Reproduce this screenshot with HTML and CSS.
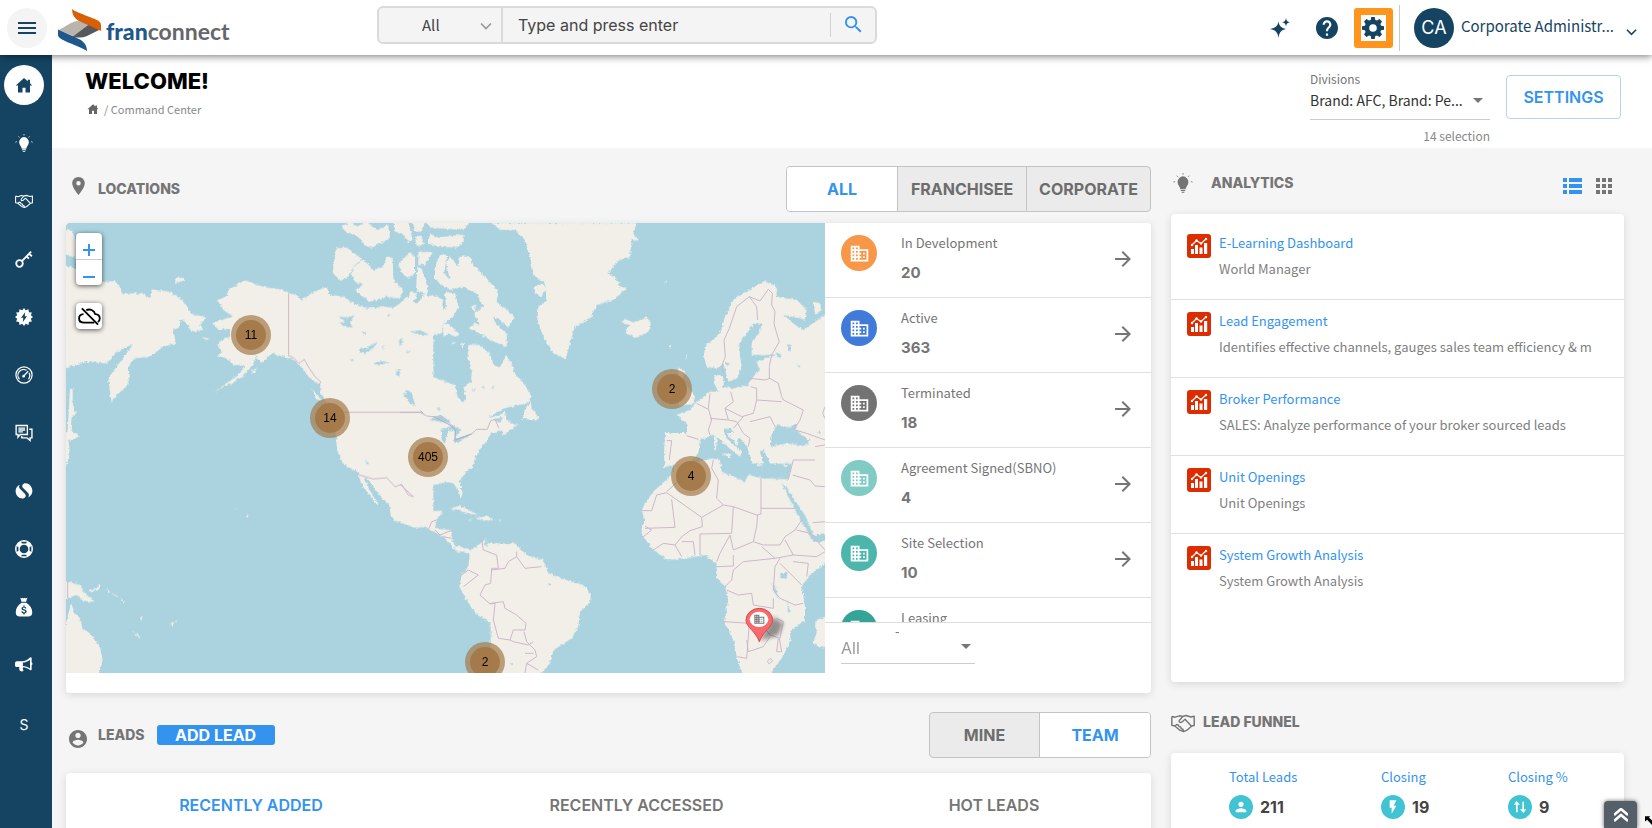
FILE: index.html
```html
<!DOCTYPE html>
<html lang="en">
<head>
<meta charset="utf-8">
<title>Command Center</title>
<link rel="stylesheet" href="styles.css">
</head>
<body>
<svg class="defs" aria-hidden="true">
  <symbol id="i-home" viewBox="0 0 24 24"><path d="M12 2.500 1 12.500h3V22h6v-6.500h4V22h6v-9.500h3l-3-2.800V5h-3v2z"/></symbol>
  <symbol id="i-bulb" viewBox="0 0 24 24"><path d="M12 4a7 7 0 0 0-6.500 7c0 3.500 3 5 3.500 8.500h6c.500-3.500 3.500-5 3.500-8.500A7 7 0 0 0 12 4zM9.300 20.300h5.400v1.200H9.300zM10.300 22.500h3.400v1.200h-3.400z"/><path d="M12 0v2M4.500 3.200l1.400 1.500M19.500 3.200l-1.400 1.500M.5 11l2-.8M23.500 11l-2-.8" stroke="currentColor" stroke-width="1" fill="none"/></symbol>
  <symbol id="i-shake" viewBox="0 0 24 24"><g fill="none" stroke="currentColor" stroke-width="1.400" stroke-linejoin="round"><path d="M.8 5.500 4 6.200l4.500-1.400 3 .7 3.500-1 5 1.500 3.200-.7v9.200l-2.700.5"/><path d="M.8 5.500v8.800l3 .7 5 4.200 3.700 1.400 3.500-1.400 4.500-4-6.500-6.900-3.200 2.900c-2 1-3.400-.7-2.200-2.200L11.500 6M3.800 15l2-1.500 1.500.4.700 1.700 1.700.4.600 1.700 1.600.4.600 2M20.500 15.200l-6-6.500"/></g></symbol>
  <symbol id="i-key" viewBox="0 0 24 24"><g fill="none" stroke="currentColor" stroke-width="2.400"><circle cx="6" cy="18" r="4.400"/><path d="M9.200 14.800 21.500 2.300M15.500 8.600l3 3M19 5l3.500 3.500"/></g></symbol>
  <symbol id="i-bolt-gear" viewBox="0 0 24 24"><path fill-rule="evenodd" d="m12 0 2.300 3.100 3.600-1.500.7 3.900 3.900.5-1.400 3.600L24 12l-2.900 2.300 1.400 3.600-3.900.7-.6 3.900-3.700-1.400L12 24l-2.300-2.900L6 22.500l-.6-3.900-3.900-.7 1.400-3.600L0 12l2.900-2.400L1.500 6l3.900-.5.6-3.900 3.700 1.500zM13.500 5.500 8 13h3l-.5 5.500L16 11h-3z"/></symbol>
  <symbol id="i-gauge" viewBox="0 0 24 24"><g fill="none" stroke="currentColor" stroke-width="1.600"><circle cx="12" cy="12" r="10.800"/><path d="M6 17.500a7.600 7.600 0 0 1 9.500-11.700M18.600 9a7.500 7.500 0 0 1-.6 8.500M11.500 13.500l6-6.500"/></g><circle cx="11.500" cy="13.500" r="1.800"/></symbol>
  <symbol id="i-chat" viewBox="0 0 24 24"><g fill="none" stroke="currentColor" stroke-width="1.800"><path d="M1.500 2h15v12H7l-3 3.500V14H1.500z"/><path d="M4.500 5.500h9M4.500 8h9M4.500 10.500h6M19 7h3.600v11.500h-2.500V22l-4-3.500H9V16"/></g></symbol>
  <symbol id="i-halves" viewBox="0 0 24 24"><path d="M6.500 3.500C3 5 .8 8.200.8 12c0 6 4.500 10 9 10 4 0 5.700-3.500 3.700-6L6.200 8.500c-1.200-1.600-.9-3.500.3-5zM17.500 20.500c3.500-1.500 5.700-4.700 5.700-8.500 0-6-4.500-10.500-9-10.500-4 0-5.700 3.500-3.700 6l7.300 7.500c1.200 1.600.9 4-.3 5.500z"/></symbol>
  <symbol id="i-ring" viewBox="0 0 24 24"><path fill-rule="evenodd" d="M12 0a12 12 0 1 0 0 24 12 12 0 0 0 0-24zm0 6.200a5.800 5.800 0 1 1 0 11.600 5.800 5.800 0 0 1 0-11.600z"/><path class="ring-cut" d="M8.200 2.200h7.600l-1 2.300H9.200zM8.200 21.800h7.600l-1-2.300H9.200zM2.200 8.200v7.600l2.300-1V9.200zM21.800 8.200v7.600l-2.300-1V9.200z"/></symbol>
  <symbol id="i-money" viewBox="0 0 24 26"><path d="M7 .8c1.300 1 2.300.6 3-.3.700 1 1.800 1 2.500 0 .7.900 2.300 1.300 4 .3L14.800 6H8.700zM8.500 7.300h6.500C20 10.500 23 15 23 20c0 4-2 5.500-5.500 5.500h-11C3 25.500 1 24 1 20c0-5 2.800-9.500 7.500-12.700z"/><path class="ring-cut" d="M11.200 11h1.600v1.500c1.500.2 2.300 1.100 2.400 2.400h-1.700c-.3-1.600-3-1.300-2.900 0 .1 1.500 5 .7 5 4 0 1.500-1.200 2.400-2.800 2.600V23h-1.600v-1.500c-1.700-.2-2.700-1.200-2.800-2.800h1.700c.2 1.900 3.600 1.700 3.500.2-.1-1.700-4.900-.7-4.900-3.900 0-1.400 1-2.300 2.500-2.500z"/></symbol>
  <symbol id="i-horn" viewBox="0 0 24 24"><path fill-rule="evenodd" d="M21 1.500c.8 0 1.200.4 1.200 1.200v6c1.500.4 1.500 3.200 0 3.600V18c0 1-1 1.400-1.800.9-3-2-6-3.500-9.500-3.900-1 1.500-.3 3 .5 4.500-1.500 1.500-4.400 1.300-5.200-.2-.7-1.600-.8-3-.4-4.500H2.500C.5 14.800 0 13.500 0 11s.5-4 2.500-4H9c4.500 0 8-2 11-5zM20 5.200c-3 2-6.500 3.400-9.500 3.600v4.400c3.400.3 6.700 1.500 9.500 3.300z"/></symbol>
  <symbol id="i-building" viewBox="0 0 24 24"><path d="M12 7V3H2v18h20V7H12zM6 19H4v-2h2v2zm0-4H4v-2h2v2zm0-4H4V9h2v2zm0-4H4V5h2v2zm4 12H8v-2h2v2zm0-4H8v-2h2v2zm0-4H8V9h2v2zm0-4H8V5h2v2zm10 12h-8v-2h2v-2h-2v-2h2v-2h-2V9h8v10zm-2-8h-2v2h2v-2zm0 4h-2v2h2v-2z"/></symbol>
  <symbol id="i-arrow" viewBox="0 0 24 24"><path d="m12 4-1.410 1.410L16.170 11H4v2h12.170l-5.580 5.590L12 20l8-8z"/></symbol>
  <symbol id="i-chart" viewBox="0 0 24 24"><rect width="24" height="24" rx="3" fill="#dd2c00"/><path fill="#fff" d="M4 15h3v5H4zM8 11h3v9H8zM12.500 13.500h3V20h-3zM17 9h3.200v11H17z"/><path d="m5 11 4.500-4.500 4.500 3L19 5" fill="none" stroke="#fff" stroke-width="1.200"/><g fill="#fff"><circle cx="5" cy="11" r="1.200"/><circle cx="9.500" cy="6.500" r="1.200"/><circle cx="14" cy="9.500" r="1.200"/><circle cx="19" cy="5" r="1.200"/></g></symbol>
  <symbol id="i-chevron" viewBox="0 0 12 8"><path d="m1 1.500 5 5 5-5" fill="none" stroke="currentColor" stroke-width="1.700"/></symbol>
</svg>

<header class="topbar">
  <button class="burger" aria-label="Menu"><svg viewBox="0 0 18 12"><path d="M0 0h18v2H0zM0 5h18v2H0zM0 10h18v2H0z"/></svg></button>
  <a class="logo" href="#">
    <svg viewBox="0 0 43 42" aria-hidden="true">
      <path fill="#b9b5ab" d="M1 21 12 14.500c5-3 9-3 13-2l7 3L15 27z"/>
      <path fill="#57585c" d="m14 28 17-12.500L43 20 30 26.500c-5 2.500-11 2.500-16 1.500z"/>
      <path fill="#d85f05" d="M14 0c4 3.500 22 9 26 11.500 2.500 1.500 3 3 3 5V22L20 11.500C16 9 14 5 14 0z"/>
      <path fill="#1d578c" d="M0 20.500 22 30.500c4.500 2.500 7 6.500 7 11.500-6-4-19-8-25-11.500-3-1.700-4-3-4-5z"/>
    </svg>
    <span class="logo-text"><b>fran</b>connect</span>
  </a>
  <form class="search">
    <div class="search-scope">
      <select aria-label="Search scope"><option>All</option></select>
      <svg viewBox="0 0 12 8"><use href="#i-chevron"/></svg>
    </div>
    <input type="text" aria-label="Search" placeholder="Type and press enter">
    <button type="button" class="search-go" aria-label="Search"><svg viewBox="3 3 18 18"><path d="M15.500 14h-.79l-.28-.27A6.471 6.471 0 0 0 16 9.500 6.500 6.500 0 1 0 9.500 16c1.610 0 3.090-.59 4.230-1.570l.27.28v.79l5 4.990L20.490 19l-4.990-5zm-6 0C7.010 14 5 11.990 5 9.500S7.010 5 9.500 5 14 7.010 14 9.500 11.990 14 9.500 14z"/></svg></button>
  </form>
  <div class="tools">
    <button aria-label="Assistant"><svg class="spark" viewBox="0 0 20 20"><path d="M8.500 3.500c.8 4.600 2.600 6.300 7.500 7.500-4.900 1.200-6.700 3.300-7.500 9-.8-5.700-2.800-7.800-8.500-9 5.700-1.200 7.700-2.900 8.500-7.500zM16 0c.4 2.700 1.300 3.600 4 4.200-2.700.6-3.600 1.500-4 4.200-.4-2.700-1.300-3.600-4-4.200 2.700-.6 3.600-1.500 4-4.200z"/></svg></button>
    <button aria-label="Help"><svg class="tool-icon" viewBox="2 2 20 20"><path d="M12 2C6.480 2 2 6.480 2 12s4.480 10 10 10 10-4.480 10-10S17.520 2 12 2zm1 17h-2v-2h2v2zm2.070-7.750-.9.920C13.450 12.900 13 13.500 13 15h-2v-.5c0-1.100.45-2.100 1.170-2.830l1.240-1.260c.37-.36.590-.86.590-1.410 0-1.100-.9-2-2-2s-2 .9-2 2H8c0-2.210 1.790-4 4-4s4 1.790 4 4c0 .88-.36 1.680-.93 2.250z"/></svg></button>
    <button class="gear" aria-label="Settings"><svg class="tool-icon" viewBox="0 0 22 22"><path fill-rule="evenodd" d="M9.300 0h3.400l.6 2.900 1.700.7L17.500 2 20 4.500 18.400 7l.7 1.700 2.900.6v3.400l-2.900.6-.7 1.700 1.600 2.500-2.500 2.500-2.500-1.600-1.700.7-.6 2.900H9.300l-.6-2.900-1.700-.7L4.500 20 2 17.500 3.600 15l-.7-1.700L0 12.700V9.300l2.900-.6L3.600 7 2 4.500 4.500 2 7 3.600l1.700-.7zM11 7.200a3.800 3.800 0 1 0 0 7.600 3.800 3.800 0 0 0 0-7.600z"/></svg></button>
  </div>
  <button class="account">
    <span class="avatar">CA</span>
    <span class="name">Corporate Administr...</span>
    <svg viewBox="0 0 12 8"><use href="#i-chevron"/></svg>
  </button>
</header>

<div class="shell">
  <nav class="side" aria-label="Main">
    <a class="on" href="#" aria-label="Home"><svg><use href="#i-home"/></svg></a>
    <a href="#" aria-label="Insights"><svg class="tall"><use href="#i-bulb"/></svg></a>
    <a href="#" aria-label="Sales"><svg><use href="#i-shake"/></svg></a>
    <a href="#" aria-label="Opener"><svg><use href="#i-key"/></svg></a>
    <a href="#" aria-label="Operations"><svg><use href="#i-bolt-gear"/></svg></a>
    <a href="#" aria-label="Performance"><svg><use href="#i-gauge"/></svg></a>
    <a href="#" aria-label="Messages"><svg><use href="#i-chat"/></svg></a>
    <a href="#" aria-label="Pipeline"><svg><use href="#i-halves"/></svg></a>
    <a href="#" aria-label="Support"><svg><use href="#i-ring"/></svg></a>
    <a href="#" aria-label="Finance"><svg class="tall"><use href="#i-money"/></svg></a>
    <a href="#" aria-label="Marketing"><svg><use href="#i-horn"/></svg></a>
    <a class="letter" href="#">S</a>
  </nav>

  <main>
    <section class="pagehead">
      <div class="titles">
        <h1>WELCOME!</h1>
        <p class="crumbs"><svg><use href="#i-home"/></svg><span>/ Command Center</span></p>
      </div>
      <div class="divisions">
        <label for="division">Divisions</label>
        <select id="division"><option>Brand: AFC, Brand: Pe...</option></select>
        <small>14 selection</small>
      </div>
      <button class="settings">SETTINGS</button>
    </section>

    <div class="columns">
      <div class="left">
        <div class="sechead">
          <svg class="pin" viewBox="5 2 14 20"><path d="M12 2C8.130 2 5 5.130 5 9c0 5.250 7 13 7 13s7-7.750 7-13c0-3.870-3.130-7-7-7zm0 9.500a2.500 2.500 0 1 1 0-5 2.500 2.500 0 0 1 0 5z"/></svg>
          <h2>LOCATIONS</h2>
          <div class="seg seg3"><button class="on">ALL</button><button>FRANCHISEE</button><button>CORPORATE</button></div>
        </div>
        <section class="card locations">
          <div class="map">
            <svg class="world" viewBox="198 669 2277 1350" preserveAspectRatio="xMidYMid slice" role="img" aria-label="Map of locations">
              <defs>
                <filter id="coast" x="0" y="0" width="100%" height="100%"><feTurbulence type="fractalNoise" baseFrequency=".11" numOctaves="3" seed="4"/><feDisplacementMap in="SourceGraphic" scale="11" xChannelSelector="R" yChannelSelector="G"/></filter>
                <filter id="soft"><feGaussianBlur stdDeviation="7"/></filter>
              </defs>
              <rect x="150" y="600" width="2400" height="1500" fill="#aad3df"/>
              <g filter="url(#coast)">
                <g class="land">
                  <g transform="translate(0 600)">
                    <path d="M190 195 230 205V125L215 90 190 92V160L230 175V250L345 243 362 265 365 280 430 280 450 295 455 268 510 275 545 300 575 340 620 355 600 372 610 390 575 395 555 365 540 360 540 380 520 390 528 430 490 440 450 470 400 475 385 500 390 530 380 560 350 585 335 608 325 540 335 520 400 432 370 445 345 460 320 490 260 485 198 503 180 510Z"/>
                    <path d="M522 240 540 230 555 240 530 248ZM210 565 218 568 218 610 228 640 215 650 212 690 238 708 215 722 190 715 203 690ZM190 735 205 740 208 765 198 800 185 800ZM604 410 628 416 620 420Z"/>
                    <path d="M652 300 680 290 685 270 735 240 770 255 800 262 850 270 866 280 885 283 905 300 925 285 965 265 980 262 990 285 1030 290 1060 310 1100 325 1150 320 1200 325 1230 350 1260 310 1300 310 1300 790 1028 790 1010 740 1008 690 1000 660 985 610 960 580 962 555 945 545 925 530 905 500 880 480 850 470 815 460 785 490 770 470 750 505 730 525 690 550 640 577 690 543 720 520 735 497 700 495 690 480 665 470 650 470 665 455 652 435 665 420 690 410 690 385 660 390 637 370 660 360 700 350 670 330Z"/>
                    <path d="M935 565 965 600 950 598Z"/>
                    <path d="M750 512 770 505 765 522ZM695 540 740 520 690 556Z"/>
                  </g>
                  <g transform="translate(990 645)">
                    <path d="M35 35 60 20 80 35 110 20 140 45 175 30 180 70 150 85 125 98 105 92 95 75 75 60 50 55ZM190 20 235 20 248 75 235 82 220 60 195 50ZM255 65 275 62 282 90 260 92ZM245 20 285 20 275 50 255 50ZM300 55 325 68 400 58 402 75 385 97 320 95 295 85ZM290 20 420 20 400 45 300 38Z"/>
                    <path d="M18 100 50 97 95 132 70 155 55 185 30 197 8 172ZM72 155 100 133 130 165 160 155 170 122 188 130 190 190 218 225 210 250 170 245 120 260 75 228 100 210 75 200 65 180ZM205 145 240 112 255 125 255 175 235 190 215 175ZM265 110 308 112 285 150 265 150ZM262 155 275 160 295 225 290 240 258 225ZM240 230 262 235 250 262 235 255Z"/>
                  </g>
                  <g transform="translate(1200 600)">
                    <path d="M-30 330 0 310 20 290 50 310 75 280 95 300 125 300 130 330 150 320 145 280 165 290 175 320 160 350 130 370 125 400 95 405 65 450 62 490 80 520 120 540 165 555 172 590 190 607 198 590 190 560 213 545 215 515 203 465 205 435 240 435 272 465 280 495 300 502 318 465 335 490 345 520 385 570 395 590 380 610 310 625 285 640 262 655 300 645 315 635 320 660 345 675 357 672 310 706 305 690 270 702 262 725 235 740 218 800-30 800Z"/>
                    <path d="M365 655 380 620 392 600 395 625 418 655 400 660ZM105 200 120 165 142 165 132 220 150 240 138 190 150 170 175 200 180 168 212 172 220 195 260 235 295 275 290 305 345 350 325 383 300 360 280 350 285 370 320 400 320 440 280 425 230 395 205 385 225 370 240 375 220 340 250 320 230 280 190 260 150 270 105 240ZM130 370 150 375 180 405 165 410 145 400 130 410ZM210 320 228 315 225 335ZM35 285 50 280 45 300ZM75 290 100 285 130 300 120 340 85 330ZM135 275 165 280 175 320 155 350 138 330ZM405 260 430 250 438 270 420 290 403 275ZM155 425 168 428 158 434ZM182 428 192 432 188 443Z"/>
                    <path d="M275 69 300 90 345 90 375 120 395 190 400 225 435 250 440 300 415 320 412 360 430 410 460 460 497 477 510 430 525 380 570 355 590 315 640 300 680 265 650 255 630 265 660 250 640 230 625 220 650 185 690 170 695 120 718 122 700 100 710 69Z"/>
                    <path d="M665 370 690 375 680 385 678 402 710 413 735 402 750 390 752 370 740 352 715 362 700 367 672 355ZM830 500 855 512 850 540 870 570 885 590 880 612 835 618 845 560ZM795 570 825 560 825 590 795 600ZM808 435 814 436 811 450ZM855 470 862 462 858 478ZM792 245 802 242 798 249Z"/>
                    <path d="M1300 330 1275 345 1245 365 1210 390 1180 370 1150 345 1215 358 1220 330 1190 300 1130 290 1130 260 1095 243 1060 262 1030 280 1000 300 975 350 960 400 915 440 912 470 920 500 950 505 970 490 985 545 1010 535 1025 500 1020 470 1018 430 1040 400 1060 370 1085 370 1080 395 1055 430 1055 465 1110 465 1140 460 1070 485 1080 510 1060 530 1045 555 1000 565 965 560 975 545 960 525 945 525 940 545 955 575 930 575 885 610 870 630 830 645 860 670 862 707 800 707 795 725 792 800 865 790 895 760 900 720 940 705 960 720 1000 755 1020 770 1026 755 980 715 970 690 990 685 1040 735 1055 790 1090 790 1080 755 1110 735 1100 760 1110 790 1300 790ZM942 710 950 712 948 755 942 750ZM1240 305 1262 310 1262 335 1245 340Z"/>
                  </g>
                  <g transform="translate(0 1320)">
                    <path d="M1010-20 1012 30 1040 80 1072 95 1080 120 1095 150 1112 170 1133 197 1135 190 1112 155 1092 118 1098 112 1108 120 1125 150 1168 195 1172 225 1200 240 1245 263 1300 262V-20Z"/>
                    <path d="M190 422 240 435 255 460 285 488 250 482 230 465 190 478ZM213 490 225 520 240 535 248 565 270 580 300 620 308 660 300 690 290 710 180 710 198 550ZM265 450 290 445 297 432 303 437 295 450 275 455ZM397 572 425 595 415 593ZM510 552 522 547 520 557ZM522 545 533 540 530 546ZM318 445 330 455 325 460ZM335 458 355 468 350 470ZM360 470 375 490 370 490ZM420 528 426 530 424 545ZM738 224 748 228 742 235ZM704 204 711 206 708 208ZM180-20 205 0 209 30 198 65 180 65Z"/>
                  </g>
                  <g transform="translate(1200 1320)">
                    <path d="M-20 240 40 262 75 262 100 275 130 290 150 310 170 335 195 335 210 345 212 330 190 322 165 318 152 290 158 270 125 268 105 262 112 235 128 212 100 213 80 238 45 235 36 200 40 165 50 145 80 135 115 133 135 125 160 130 175 150 182 175 188 160 178 125 195 100 220 75 225 50 240 30 262-20-20-20Z"/>
                    <path d="M210 335 260 295 265 310 290 310 345 310 380 345 430 360 445 400 500 420 550 435 573 460 570 490 540 515 535 560 515 595 460 630 450 670 415 710 272 710 272 550 225 520 200 480 178 440 185 405 205 380ZM150 205 180 197 235 225 205 220ZM225 235 260 228 285 240 250 242ZM203 240 218 240 210 243ZM296 239 308 241 298 243Z"/>
                    <path d="M795-20 792 50 812 75 830 68 865 55 880 25 895 0 895-20ZM1085-20 1080 10 1060 40 1045 20 1040-20ZM1020-20 1012 20 1000 0 980-20ZM965 40 995 42 990 55ZM945 0 950 0 948 15 942 10ZM1068 70 1090 75 1072 78Z"/>
                    <path d="M1090 30 1090-20 1300-20 1300 340 1275 370 1225 410 1205 440 1215 500 1215 540 1170 575 1172 600 1145 655 1105 710 1030 710 1010 650 1000 600 972 545 985 480 975 440 948 410 950 370 915 345 855 355 805 360 760 330 730 290 723 275 733 240 725 212 735 190 760 155 810 110 825 78 870 70 935 55 960 60 965 95 1000 110 1035 125 1045 105 1090 115 1165 118 1178 60 1150 70 1110 65ZM1275 530 1245 545 1250 580 1240 605 1255 622 1290 620V530ZM1148 75 1162 76 1155 82Z"/>
                  </g>
                </g>
                <g class="water">
                  <g transform="translate(990 645)"><path d="M25 305 55 308 72 300 60 325 68 338 45 335 28 325 45 318ZM88 400 108 400 145 378 130 398 105 415 88 412ZM132 445 155 438 180 443 140 452ZM200 465 212 460 208 485 198 480ZM220 540 235 530 258 572 240 565 238 550 225 548ZM208 375 218 368 216 392 208 390ZM240 350 270 345 300 360 262 358ZM228 410 240 405 235 415ZM170 300 180 298 176 306ZM95 350 108 348 102 358ZM155 395 165 390 160 402ZM320 580 330 576 328 586ZM455 518 465 510 460 524ZM425 525 435 520 430 530ZM485 512 493 515 488 522ZM105 735 118 745 110 748ZM60 435 72 430 68 440Z"/></g>
                  <g transform="translate(0 600)"><path d="M445 275 440 295 435 280Z"/></g>
                  <g transform="translate(1200 600)"><path d="M1110 715 1130 672 1165 682 1195 670 1185 690 1230 722 1215 738 1160 730 1115 740ZM85 660 120 645 150 660 145 668ZM122 690 160 675 185 690 170 705 160 690 145 690 135 730 125 720ZM160 720 215 700 200 712 165 728ZM15 570 35 575 45 620 25 600ZM1125 455 1145 465 1140 475ZM1160 430 1175 435 1170 460ZM1190 495 1202 498 1198 505ZM975 485 990 490 980 500ZM1255 700 1258 690 1262 700ZM280 660 310 650 300 668Z"/></g>
                  <g transform="translate(1200 1320)"><path d="M1145 130 1162 145 1180 175 1215 225 1240 285 1285 283V305L1240 305 1215 265 1190 220 1160 160ZM1140 400 1162 398 1160 415 1142 415ZM1120 425 1124 440 1138 470 1132 473 1118 445ZM1162 480 1170 515 1164 518ZM255 300 265 298 262 322 255 315ZM330 670 340 670 338 676ZM445 430 455 430 448 438ZM158 0 190 0 165 10Z"/></g>
                </g>
              </g>
              <g class="borders">
                <g transform="translate(0 600)"><path d="M866 280V468L880 472 897 490 913 478 925 500 945 530 962 545 957 556M1030 637H1265"/></g>
                <g transform="translate(1200 600)"><path d="M0 637H60L80 648 120 652 150 670 167 690 165 722 215 702 230 688 262 688 272 662 285 658 297 685M970 520 968 490 976 470 972 420 988 385 1010 320 1048 290 1070 320 1073 360M1048 290 1080 303 1105 268 1117 280 1115 315 1125 335 1122 370 1130 400 1138 425 1115 465 1108 500 1108 535M1050 535 1095 540 1110 535 1135 550 1145 590 1150 600 1210 630 1200 660 1180 690M1070 600 1145 605M1070 600 1070 565 1052 560M1070 600 1060 640 1025 650 975 625 1000 605 992 575M930 580 925 625 935 660 925 690 930 705M890 610 925 628M975 625 985 660 930 655M985 660 1010 665 1030 700 1050 715 1045 740M1030 650 1000 685M1050 665 1110 650 1125 680M860 707 895 718M800 722 815 722 808 780M1185 690 1220 700 1275 720M1245 740 1275 735M1275 620 1268 640 1275 655"/></g>
                <g transform="translate(0 1320)"><path d="M1072 103 1120 117 1160 113 1185 140 1205 133 1225 165 1240 170M203 422V476"/></g>
                <g transform="translate(1200 1320)"><path d="M0 133 40 170M85 270 95 245 110 240M105 270 120 285 158 270M130 290 155 295M245 300 250 330 290 345 295 385 275 385 272 430 255 435 240 465 270 492 285 490 280 540 295 595 330 600 340 570 375 570 378 550 350 525 315 505 310 485 272 490M275 390 315 385 325 365 350 350 350 335M350 350 375 385 425 380M185 405 205 390 235 405 190 440M330 600 340 605 385 615 400 605M372 575 380 605 405 630 410 650 380 670 415 690M400 640 375 640M380 670 375 699M725 212 755 212 770 165 800 158 905 232 907 260 870 272 845 290 825 315M815 178 825 262 735 265M800 155 850 110M905 232 970 195 950 175 955 120 935 85 940 60M970 195 1000 200 1070 225 1083 222 1083 115M1083 205H1185M1000 200 995 280 900 282 900 345M1073 225 1070 260 1060 305 1000 330 990 285 960 340 950 365M1060 305 1090 315 1140 315 1155 290 1185 270 1205 240M1085 320 1125 355 1180 345 1155 300M1180 345 1250 350 1275 335M1190 270 1230 280 1275 330M1140 355 1125 380 1120 450 1140 475 1185 495 1210 490M1140 370 1205 435M1180 365 1225 370 1220 410M1125 355 1030 365 1000 390 995 420 975 440M950 380 1000 378 1000 345M980 450 1015 465 1055 460 1060 495 1120 505M972 545 1048 550 1045 590 1040 655 1012 650M1048 550 1080 545 1110 585 1140 595 1150 545 1130 535M1120 505 1120 475M1040 600 1045 635 1090 620 1110 590M1135 595 1130 635 1145 635 1138 595M1110 655 1118 662 1108 672 1102 665ZM1165 118 1180 60 1245 60M1178 105 1230 120 1245 138 1275 140M1238 248 1275 245M760 330 790 310 825 315 845 350M845 305 880 305 885 345M730 290 755 270 735 258"/></g>
              </g>
              <path d="M1261 1232 1270 1240M1300 1250 1350 1275 1366 1290 1365 1320 1415 1302" fill="none" stroke="#9db4d3" stroke-width="3"/>
              <g class="cluster">
                <g transform="translate(753 1005)"><circle r="60"/><circle r="45"/><text y="12">11</text></g>
                <g transform="translate(990 1254)"><circle r="60"/><circle r="45"/><text y="12">14</text></g>
                <g transform="translate(1284 1371)"><circle r="60"/><circle r="45"/><text y="12">405</text></g>
                <g transform="translate(2016 1167)"><circle r="60"/><circle r="45"/><text y="12">2</text></g>
                <g transform="translate(2073 1428)"><circle r="60"/><circle r="45"/><text y="12">4</text></g>
                <g transform="translate(1455 1986)"><circle r="60"/><circle r="45"/><text y="12">2</text></g>
              </g>
              <path d="M2280 1922 2318 1850 2350 1870 2335 1905Z" fill="#000" opacity=".4" filter="url(#soft)"/>
              <path d="M2278 1925c-10-30-40-45-40-64a40 36 0 0 1 80 0c0 19-30 34-40 64z" fill="#f86a6c" stroke="#d8434b" stroke-width="3"/>
              <ellipse cx="2277" cy="1858" rx="28" ry="23" fill="#fff"/>
              <svg x="2259" y="1840" width="38" height="36" fill="#4c4f59"><use href="#i-building"/></svg>
            </svg>
            <div class="zoomer"><button aria-label="Zoom in"><svg viewBox="0 0 12 12"><path d="M0 6h12M6 0v12"/></svg></button><button aria-label="Zoom out"><svg viewBox="0 0 12 12"><path d="M0 6h12"/></svg></button></div>
            <button class="cloud" aria-label="Hide weather"><svg viewBox="0 0 24 20"><path d="M8.500 3.500A6.500 6.500 0 0 1 18 7.500c3 .3 4.800 2 4.800 4.500 0 1.800-.8 3-2 3.800M17 16.500H6.500C3 16.500 1 14.500 1 12c0-2.400 1.900-4.300 4.700-4.500M4 1.500l17 17" fill="none" stroke="#000" stroke-width="1.900"/></svg></button>
          </div>
          <div class="status">
            <ul>
              <li><span class="dot orange"><svg><use href="#i-building"/></svg></span><div><p>In Development</p><strong>20</strong></div><svg class="go"><use href="#i-arrow"/></svg></li>
              <li><span class="dot blue"><svg><use href="#i-building"/></svg></span><div><p>Active</p><strong>363</strong></div><svg class="go"><use href="#i-arrow"/></svg></li>
              <li><span class="dot grey"><svg><use href="#i-building"/></svg></span><div><p>Terminated</p><strong>18</strong></div><svg class="go"><use href="#i-arrow"/></svg></li>
              <li><span class="dot mint"><svg><use href="#i-building"/></svg></span><div><p>Agreement Signed(SBNO)</p><strong>4</strong></div><svg class="go"><use href="#i-arrow"/></svg></li>
              <li><span class="dot teal"><svg><use href="#i-building"/></svg></span><div><p>Site Selection</p><strong>10</strong></div><svg class="go"><use href="#i-arrow"/></svg></li>
              <li><span class="dot deep"><svg><use href="#i-building"/></svg></span><div><p>Leasing</p></div></li>
            </ul>
            <div class="filter"><span class="dash" aria-hidden="true">-</span><select aria-label="Filter by division"><option>All</option></select></div>
          </div>
        </section>

        <div class="sechead leads-head">
          <svg class="user" viewBox="2 2 20 20"><path d="M12 2C6.480 2 2 6.480 2 12s4.480 10 10 10 10-4.480 10-10S17.520 2 12 2zm0 3c1.660 0 3 1.340 3 3s-1.340 3-3 3-3-1.340-3-3 1.340-3 3-3zm0 14.200c-2.500 0-4.710-1.280-6-3.220.03-1.990 4-3.080 6-3.080 1.990 0 5.970 1.090 6 3.080-1.290 1.940-3.500 3.220-6 3.220z"/></svg>
          <h2>LEADS</h2>
          <button class="add">ADD LEAD</button>
          <div class="seg seg2"><button>MINE</button><button class="on">TEAM</button></div>
        </div>
        <section class="card leads">
          <button class="on">RECENTLY ADDED</button><button>RECENTLY ACCESSED</button><button>HOT LEADS</button>
        </section>
      </div>

      <div class="right">
        <div class="sechead analytics-head">
          <svg class="bulb"><use href="#i-bulb"/></svg>
          <h2>ANALYTICS</h2>
          <div class="views">
            <button class="on" aria-label="List view"><svg class="list-icon" viewBox="0 0 19 16"><path d="M0 0h4v4H0zM6 0h13v4H6zM0 6h4v4H0zM6 6h13v4H6zM0 12h4v4H0zM6 12h13v4H6z"/></svg></button>
            <button aria-label="Grid view"><svg class="grid-icon" viewBox="0 0 16 16"><path d="M0 0h4v4H0zM6 0h4v4H6zM12 0h4v4h-4zM0 6h4v4H0zM6 6h4v4H6zM12 6h4v4h-4zM0 12h4v4H0zM6 12h4v4H6zM12 12h4v4h-4z"/></svg></button>
          </div>
        </div>
        <section class="card analytics">
          <article><svg><use href="#i-chart"/></svg><div><a href="#">E-Learning Dashboard</a><p>World Manager</p></div></article>
          <article><svg><use href="#i-chart"/></svg><div><a href="#">Lead Engagement</a><p>Identifies effective channels, gauges sales team efficiency &amp; m</p></div></article>
          <article><svg><use href="#i-chart"/></svg><div><a href="#">Broker Performance</a><p>SALES: Analyze performance of your broker sourced leads</p></div></article>
          <article><svg><use href="#i-chart"/></svg><div><a href="#">Unit Openings</a><p>Unit Openings</p></div></article>
          <article><svg><use href="#i-chart"/></svg><div><a href="#">System Growth Analysis</a><p>System Growth Analysis</p></div></article>
        </section>
        <div class="sechead funnel-head">
          <svg class="shake"><use href="#i-shake"/></svg>
          <h2>LEAD FUNNEL</h2>
        </div>
        <section class="card funnel">
          <div><a href="#">Total Leads</a><p><span><svg viewBox="0 0 24 24"><path d="M12 12c2.210 0 4-1.790 4-4s-1.790-4-4-4-4 1.790-4 4 1.790 4 4 4zm0 2c-2.670 0-8 1.340-8 4v2h16v-2c0-2.660-5.330-4-8-4z"/></svg></span>211</p></div>
          <div><a href="#">Closing</a><p><span><svg viewBox="0 0 24 24"><path d="M7 2v11h3v9l7-12h-4l4-8z"/></svg></span>19</p></div>
          <div><a href="#">Closing %</a><p><span><svg viewBox="0 0 24 24"><path d="M7 3 2.500 8.500H6V20h2.500V8.500H12zM17 21l4.500-5.500H18V4h-2.500v11.500H12z"/></svg></span>9</p></div>
        </section>
      </div>
    </div>
  </main>
</div>
<button class="to-top" aria-label="Back to top"><svg viewBox="0 0 14 14"><path d="m0 7 7-6 7 6M0 13l7-6 7 6" fill="none" stroke="#fff" stroke-width="2.600"/></svg></button>
<svg class="pointer" viewBox="0 0 8 10" aria-hidden="true"><path d="M0 0h6L4.500 1.500 8 5v5L2.500 4 0 6z"/></svg>
</body>
</html>
```

FILE: styles.css
```css
* { box-sizing: border-box; }
:root {
  --text: "Noto Sans CJK SC", sans-serif;
  --head: Inter, sans-serif;
  --navy: #154463;
  --blue: #3393ef;
  --grey: #757575;
}
body {
  margin: 0;
  height: 100vh;
  display: flex;
  flex-direction: column;
  overflow: hidden;
  background: #f5f5f5;
  font: 13px/20px var(--text);
  color: var(--grey);
}
h1, h2, p, ul { margin: 0; padding: 0; }
a { color: var(--blue); text-decoration: none; }
button, select, input { font: inherit; color: inherit; border: 0; background: none; padding: 0; margin: 0; }
button { cursor: pointer; }
select { appearance: none; }
svg { display: block; fill: currentColor; flex: none; }
.defs { position: absolute; width: 0; height: 0; }
.ring-cut { fill: var(--navy); }

.topbar {
  position: relative;
  z-index: 2;
  flex: none;
  display: flex;
  align-items: center;
  height: 55px;
  padding: 0 15px 0 7px;
  background: #fff;
  color: var(--navy);
  box-shadow: 0 1px 8px rgba(0, 0, 0, .55);
}
.burger { display: grid; place-items: center; width: 40px; height: 40px; border-radius: 50%; background: #f4f4f4; }
.burger svg { width: 18px; height: 12px; }
.logo { display: flex; align-items: center; gap: 5px; width: 173px; margin-left: 11px; color: #65666a; }
.logo > svg { width: 43px; height: 42px; margin-top: 4px; }
.logo-text { font: 700 23px/30px Lato, sans-serif; margin-top: 7px; }
.logo-text b { color: #1d578c; }
.search {
  display: flex;
  align-items: center;
  width: 500px;
  height: 38px;
  margin: 0 auto 6px 146px;
  border: 2px solid #dadada;
  border-radius: 6px;
  background: #f4f4f4;
  color: #444;
}
.search-scope { position: relative; width: 124px; height: 34px; border-right: 2px solid #dadada; }
.search-scope select { width: 100%; height: 100%; padding-left: 43px; font-size: 15px; line-height: 20px; }
.search-scope svg { position: absolute; right: 9px; top: 14px; width: 12px; height: 8px; color: #999; pointer-events: none; }
.search input { flex: 1; min-width: 0; height: 24px; padding: 0 15px; border-right: 1px solid #d2d2d2; font: 16px/20px var(--head); outline: 0; }
.search input::placeholder { color: #444; opacity: 1; }
.search-go { display: grid; place-items: center; width: 44px; height: 34px; color: var(--blue); }
.search-go svg { width: 17px; height: 17px; }
.tools { display: flex; align-items: center; height: 46px; padding-right: 6px; margin-right: 14px; border-right: 1px solid #c9c9c9; }
.tools button { display: grid; place-items: center; width: 22px; height: 40px; margin-left: 25px; }
.tools .gear { width: 39px; margin-left: 16px; border: 7px solid #ff951c; border-radius: 3px; }
.spark { width: 20px; height: 20px; }
.tool-icon { width: 22px; height: 22px; }
.account { display: flex; align-items: center; gap: 7px; font-size: 15px; }
.account > svg { width: 11px; height: 8px; margin: 9px 0 0 5px; }
.name { padding-bottom: 3px; }
.avatar { display: grid; place-items: center; width: 40px; height: 40px; border-radius: 50%; background: var(--navy); color: #fff; font: 400 18px/24px var(--head); }

.shell { flex: 1; display: flex; min-height: 0; }
.side { display: flex; flex-direction: column; align-items: center; gap: 18px; width: 52px; padding: 10px 4px 0 0; background: var(--navy); flex: none; }
.side a { display: grid; place-items: center; width: 40px; height: 40px; border-radius: 50%; color: #fff; }
.side .on { background: #fff; color: var(--navy); }
.side svg { width: 18px; height: 18px; }
.side .tall { height: 20px; }
.side .letter { padding-top: 4px; font: 14px/20px var(--head); }

main { flex: 1; min-width: 0; overflow: hidden; }
.pagehead { display: flex; height: 93px; padding: 13px 31px 0 33px; background: #fff; }
.titles { flex: 1; }
h1 { font: 800 22px/26px var(--head); color: #000; }
.crumbs { display: flex; align-items: center; gap: 5px; margin-top: 5px; padding-left: 2px; font-size: 11px; color: #888; }
.crumbs svg { width: 12px; height: 12px; color: #666; }
.divisions { display: flex; flex-direction: column; width: 180px; margin: 1px 16px 0 0; font-size: 12px; }
.divisions label { line-height: 20px; }
.divisions select, .filter select { border-bottom: 1px solid #ccc; }
.divisions select { height: 31px; padding-bottom: 8px; font-size: 14px; color: #333; }
.divisions, .filter { position: relative; }
.divisions::after, .filter::after { content: ""; position: absolute; border: 5px solid transparent; border-top-color: #757575; border-bottom: 0; pointer-events: none; }
.divisions::after { right: 7px; top: 29px; }
.divisions small { margin-top: 6px; text-align: right; font-size: 12px; color: #888; }
.settings { width: 115px; height: 44px; margin-top: 7px; border: 1px solid #b9d3ea; border-radius: 4px; color: var(--blue); font: 600 16px/20px var(--head); }

.columns { display: grid; grid-template-columns: minmax(0, 1085fr) minmax(0, 453fr); gap: 20px; padding: 0 28px 0 14px; }
.sechead { display: flex; align-items: center; }
h2 { font: 800 14px/18px var(--head); color: var(--grey); }
.left .sechead { height: 75px; padding-top: 6px; }
.pin { width: 13px; height: 18px; margin: 0 13px 5px 6px; }
.seg { display: grid; height: 46px; margin-left: auto; border: 1px solid #c4c4c4; border-radius: 4px; background: #ebebeb; overflow: hidden; }
.seg3 { grid-template-columns: 110px 129px 124px; }
.seg2 { grid-template-columns: 109px 111px; }
.seg button { font: 700 16px/20px var(--head); color: #6d6d6d; }
.seg button + button { border-left: 1px solid #c4c4c4; }
.seg .on { background: #fff; }
.seg button.on { color: var(--blue); }
.card { background: #fff; border-radius: 4px; box-shadow: 0 2px 8px rgba(0, 0, 0, .12); }

.locations { display: grid; grid-template-columns: minmax(0, 759fr) minmax(0, 326fr); padding-bottom: 20px; overflow: hidden; }
.map { position: relative; height: 450px; }
.world { width: 100%; height: 100%; }
.land { fill: #f2efe9; }
.water { fill: #aad3df; }
.borders { fill: none; stroke: #cdb7c9; stroke-width: 3; stroke-linejoin: round; }
.cluster circle { fill: #a47a49; fill-opacity: .7; }
.cluster circle + circle { fill: #a47846; fill-opacity: .9; }
.cluster text { font: 36px "Liberation Sans", sans-serif; text-anchor: middle; fill: #000; }
.zoomer, .cloud { position: absolute; left: 10px; width: 26px; border-radius: 4px; background: #fff; box-shadow: 0 1px 5px rgba(0, 0, 0, .65); }
.zoomer { top: 10px; }
.zoomer button { display: grid; place-items: center; width: 26px; height: 26px; padding-top: 8px; }
.zoomer button + button { border-top: 1px solid #ccc; }
.zoomer svg { width: 12px; height: 12px; stroke: var(--blue); stroke-width: 2; }
.cloud { display: grid; place-items: center; top: 80px; height: 26px; }
.cloud svg { width: 23px; height: 19px; }

.status ul { height: 400px; overflow: hidden; border-bottom: 1px solid #ddd; list-style: none; }
.status li { display: flex; align-items: flex-start; height: 75px; padding: 12px 16px 0; border-bottom: 1px solid #e0e0e0; }
.status li div { flex: 1; margin-left: 24px; }
.status li p { line-height: 16px; }
.status strong { display: block; margin-top: 13px; font: 700 15px/18px var(--head); }
.go { width: 24px; height: 24px; margin: 12px 0 0; }
.dot { display: grid; place-items: center; width: 36px; height: 36px; border-radius: 50%; color: #fff; }
.dot svg { width: 21px; height: 21px; }
.orange { background: #f89747; }
.blue { background: #407bd9; }
.dot.grey { background: #737373; }
.mint { background: #80cbc4; }
.teal { background: #4db6ac; }
.deep { background: #34a398; }
.filter { padding: 9px 16px 0; }
.filter select { display: block; width: 134px; height: 32px; font: 16px/20px var(--head); color: #999; }
.filter::after { left: 136px; top: 21px; }
.dash { position: absolute; left: 70px; top: -2px; line-height: 20px; }

.left .leads-head { height: 80px; padding-top: 3px; }
.user { width: 18px; height: 18px; margin: 8px 11px 0 3px; }
.add { width: 118px; height: 20px; margin-left: 12px; border-radius: 3px; background: var(--blue); color: #fff; font: 700 16px/20px var(--head); }
.leads { display: grid; grid-template-columns: 370fr 401fr 314fr; height: 200px; }
.leads button { height: 64px; font: 600 16px/20px var(--head); }
.leads .on { color: var(--blue); }

.analytics-head { height: 66px; padding-top: 4px; }
.bulb { width: 20px; height: 20px; margin-left: 2px; margin-right: 18px; }
.views { display: flex; gap: 14px; margin: 6px 12px 0 auto; }
.views .on { color: var(--blue); }
.list-icon { width: 19px; height: 16px; }
.grid-icon { width: 16px; height: 16px; }
.analytics { min-height: 468px; padding-top: 8px; }
.analytics article { display: flex; gap: 8px; height: 78px; padding: 11px 16px 0; border-bottom: 1px solid #e0e0e0; }
.analytics article:last-child { border: 0; }
.analytics article > svg { width: 24px; height: 24px; margin-top: 1px; }
.analytics article div { min-width: 0; overflow: hidden; white-space: nowrap; }
.analytics article a { display: block; }
.analytics article p { margin-top: 6px; color: #808080; }
.funnel-head { height: 71px; padding-top: 10px; }
.shake { width: 24px; height: 24px; margin-right: 8px; }
.funnel-head h2 { padding-bottom: 2px; }
.funnel { display: grid; grid-template-columns: 152fr 127fr 116fr; height: 200px; padding: 14px 0 0 58px; }
.funnel p { display: flex; align-items: center; gap: 7px; margin-top: 8px; color: #444; font: 700 16px/24px var(--head); }
.funnel p span { display: grid; place-items: center; width: 24px; height: 24px; border-radius: 50%; background: #40c4d3; color: #fff; }
.funnel p svg { width: 16px; height: 16px; }

.to-top { position: fixed; z-index: 3; right: 15px; bottom: 0; display: grid; place-items: center; width: 33px; height: 27px; border-radius: 4px 4px 0 0; background: #555f69; box-shadow: 0 0 4px rgba(0, 0, 0, .6); }
.to-top svg { width: 14px; height: 14px; }
.pointer { position: fixed; z-index: 3; right: 0; bottom: 3px; width: 7px; height: 9px; fill: #000; }
```
